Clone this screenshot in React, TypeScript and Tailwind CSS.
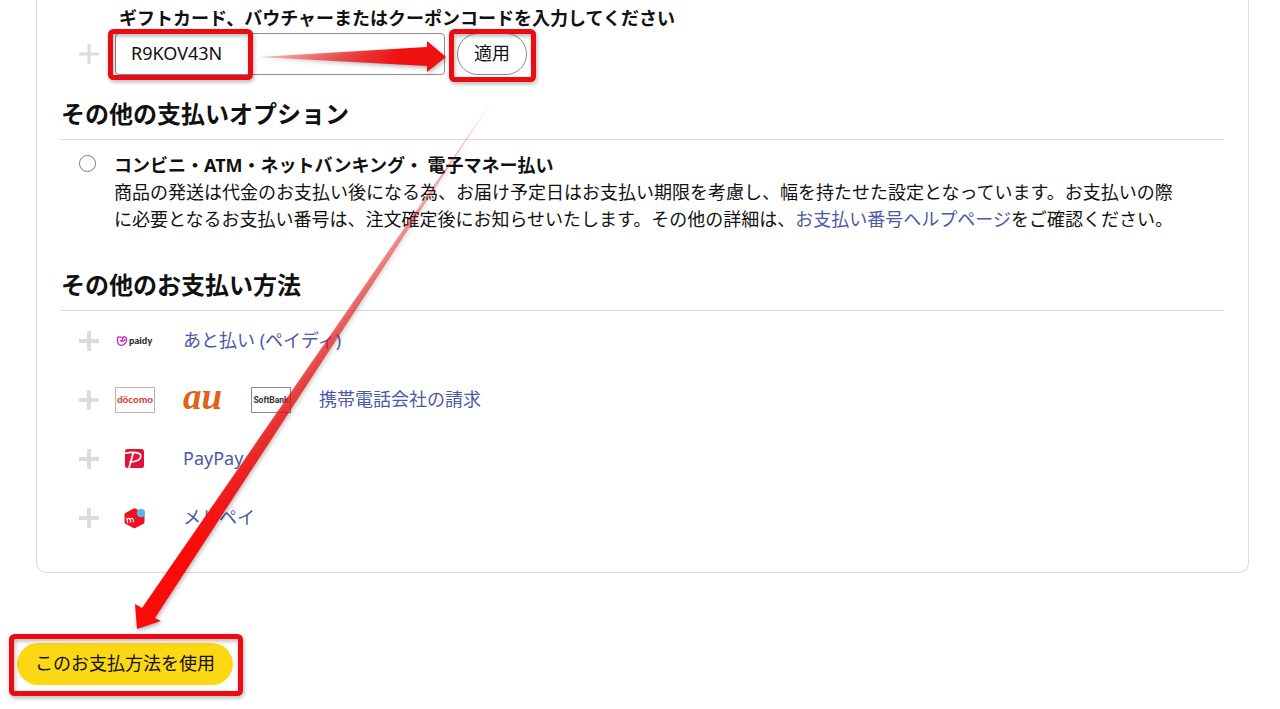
import type { ReactNode } from "react";

type PaymentMethod = {
  name: string;
  logos: ReactNode[];
};

const PlusIcon = ({ thin = false }: { thin?: boolean }) => (
  <svg viewBox="0 0 20 20" className="size-5" aria-hidden="true">
    <path d="M10 0v20M0 10h20" stroke="#dcdcdc" strokeWidth={thin ? 3 : 4} />
  </svg>
);

const PaidyLogo = () => (
  <svg viewBox="0 0 40 26" className="h-[26px] w-10" role="img" aria-label="paidy">
    <g fill="none" stroke="#c02bb4" strokeWidth="1.3" strokeLinecap="round">
      <path d="M3 9.200h3.200c1.800 0 2.300 2.600.2 3.200" />
      <path d="M3 9.200C2.300 11.500 2.200 15 4 16.600c1.700 1.400 4.900.9 6.300-1.400 1.400-2.300 1.600-4.900.2-6-1.200-.9-2.600-.2-2.700 1" />
      <path d="M5.200 12.600c1.400 1.200 3.800.8 4.600-.9" />
    </g>
    <text x="14" y="16" fontFamily="Lato, sans-serif" fontWeight="900" fontSize="9.5" fill="#26262b">
      paidy
    </text>
  </svg>
);

const DocomoLogo = () => (
  <svg viewBox="0 0 40 26" className="h-[26px] w-10" role="img" aria-label="docomo">
    <rect x="0.5" y="0.5" width="39" height="25" fill="#fff" stroke="#b5b5b5" />
    <text x="20" y="16" textAnchor="middle" fontFamily="Lato, sans-serif" fontWeight="900" fontSize="10" fill="#d8453f">
      döcomo
    </text>
  </svg>
);

const AuLogo = () => (
  <svg viewBox="0 0 40 26" className="h-[26px] w-10 overflow-visible" role="img" aria-label="au">
    <text
      x="0"
      y="22"
      fontFamily="'Liberation Serif', serif"
      fontStyle="italic"
      fontWeight="700"
      fontSize="37"
      fill="#dd6418"
    >
      au
    </text>
  </svg>
);

const SoftBankLogo = () => (
  <svg viewBox="0 0 40 26" className="h-[26px] w-10" role="img" aria-label="SoftBank">
    <rect x="0.5" y="0.5" width="39" height="25" fill="#fff" stroke="#888" />
    <text
      x="20"
      y="16"
      textAnchor="middle"
      fontFamily="Roboto, sans-serif"
      fontWeight="700"
      fontSize="8.5"
      fill="#333"
    >
      SoftBank
    </text>
  </svg>
);

const PayPayLogo = () => (
  <svg viewBox="0 0 40 26" className="h-[26px] w-10" role="img" aria-label="PayPay">
    <rect x="10" y="3" width="19" height="19" rx="2.5" fill="#e3123c" />
    <g fill="none" stroke="#fff">
      <path d="M10 7.300c7-1.600 16-1.200 15.800 3 -.2 3.600-5.500 5.500-11.300 5.700" strokeWidth="1.6" />
      <path d="M18.200 7 14 22" strokeWidth="1.7" />
    </g>
  </svg>
);

const MerpayLogo = () => (
  <svg viewBox="0 0 40 26" className="h-[26px] w-10" role="img" aria-label="メルペイ">
    <path
      d="M18.500 3.400 10.400 8.100Q9.500 8.700 9.500 9.700v7.400q0 1 .9 1.600l8.100 4.400q1 .5 2 0l8.100-4.400q.9-.6.9-1.600V9.700q0-1-.9-1.600L20.500 3.400q-1-.5-2 0z"
      fill="#ee1220"
    />
    <circle cx="26" cy="8" r="4.300" fill="#59b8ef" />
    <path
      d="M12.800 18.200l-1-5.200M12.300 14.800c.8-2 2.600-1.900 2.900-.1l.6 3M15.300 14.500c.8-1.800 2.500-1.700 2.800 0l.5 2.700"
      fill="none"
      stroke="#fff"
      strokeWidth="1.1"
    />
  </svg>
);

const methods: PaymentMethod[] = [
  { name: "あと払い (ペイディ)", logos: [<PaidyLogo key="paidy" />] },
  {
    name: "携帯電話会社の請求",
    logos: [<DocomoLogo key="docomo" />, <AuLogo key="au" />, <SoftBankLogo key="softbank" />],
  },
  { name: "PayPay", logos: [<PayPayLogo key="paypay" />] },
  { name: "メルペイ", logos: [<MerpayLogo key="merpay" />] },
];

const SectionTitle = ({ children }: { children: ReactNode }) => (
  <h2 className="border-b border-[#dcdcdc] pb-[7px] text-2xl leading-9 font-bold">{children}</h2>
);

const CouponForm = () => (
  <div className="flex items-end pl-[18px]">
    <div className="flex h-[42px] items-center">
      <button type="button" aria-label="コードを入力" className="block">
        <PlusIcon thin />
      </button>
    </div>
    <div className="pl-4">
      <label htmlFor="coupon" className="block pb-px pl-1 font-bold">
        ギフトカード、バウチャーまたはクーポンコードを入力してください
      </label>
      <div className="flex gap-3">
        <input
          id="coupon"
          type="text"
          defaultValue="R9KOV43N"
          className="h-[42px] w-[330px] rounded border border-[#8c8c8c] px-[15px] pb-0.5"
        />
        <button type="button" className="h-[42px] rounded-full border border-[#8c8c8c] px-4 pb-0.5">
          適用
        </button>
      </div>
    </div>
  </div>
);

const MethodRow = ({ name, logos }: PaymentMethod) => (
  <li className="flex h-[59px] items-center pl-[18px]">
    <button type="button" aria-label={`${name}を開く`}>
      <PlusIcon />
    </button>
    <div className="flex items-center gap-7 pl-4">
      {logos}
      <a href="#" className="text-[#4b59a8]">
        {name}
      </a>
    </div>
  </li>
);

// Red frames and arrows that walk the reader through the steps
const GuideOverlay = () => (
  <svg
    viewBox="0 0 560 709"
    className="pointer-events-none absolute top-0 left-0 h-[709px] w-[560px] drop-shadow-[1px_2px_2px_rgba(0,0,0,0.3)]"
    aria-hidden="true"
  >
    <defs>
      <linearGradient id="fade-right" gradientUnits="userSpaceOnUse" x1="256" y1="57" x2="400" y2="57">
        <stop offset="0" stopColor="#f01010" stopOpacity="0.25" />
        <stop offset="1" stopColor="#f01010" />
      </linearGradient>
      <linearGradient id="fade-down" gradientUnits="userSpaceOnUse" x1="492" y1="100" x2="190" y2="550">
        <stop offset="0" stopColor="#f50c0c" stopOpacity="0.15" />
        <stop offset="0.4" stopColor="#ec1414" stopOpacity="0.55" />
        <stop offset="0.75" stopColor="#ec1414" stopOpacity="0.86" />
        <stop offset="1" stopColor="#fb0a0a" />
      </linearGradient>
    </defs>
    <g fill="none" stroke="#ea0c12" strokeWidth="5">
      <rect x="110.5" y="31.5" width="140" height="46" rx="3" />
      <rect x="451.5" y="31.5" width="82" height="48" rx="3" />
      <rect x="11.5" y="636.5" width="229" height="57" rx="3" />
    </g>
    <path d="M258 57 427 47V41L446 57 427 72V66z" fill="url(#fade-right)" />
    <path d="M492 101 142 608 135 604 137 629 161 621 155 618z" fill="url(#fade-down)" />
  </svg>
);

export default function App() {
  return (
    <div className="relative bg-white pb-6 font-['Noto_Sans','Noto_Sans_CJK_JP',sans-serif] text-lg leading-[27px] text-[#111]">
      <main className="mr-[31px] ml-9 rounded-b-[10px] border border-t-0 border-[#dcdcdc] px-6 pt-[5px] pb-[25px]">
        <CouponForm />

        <section className="pt-[21px]">
          <SectionTitle>その他の支払いオプション</SectionTitle>
          <div className="flex pt-3 pr-10 pl-[18px]">
            <input
              id="convenience"
              type="radio"
              name="payment"
              className="mt-[3px] size-[17px] shrink-0 appearance-none rounded-full border border-[#777] checked:border-[5px]"
            />
            <div className="pl-[18px]">
              <label htmlFor="convenience" className="font-bold">
                コンビニ・ATM・ネットバンキング・ 電子マネー払い
              </label>
              <p>
                商品の発送は代金のお支払い後になる為、お届け予定日はお支払い期限を考慮し、幅を持たせた設定となっています。お支払いの際に必要となるお支払い番号は、注文確定後にお知らせいたします。その他の詳細は、
                <a href="#" className="text-[#4b59a8]">
                  お支払い番号ヘルプページ
                </a>
                をご確認ください。
              </p>
            </div>
          </div>
        </section>

        <section className="pt-[34px]">
          <SectionTitle>その他のお支払い方法</SectionTitle>
          <ul>
            {methods.map((method) => (
              <MethodRow key={method.name} {...method} />
            ))}
          </ul>
        </section>
      </main>

      <div className="pt-[70px] pl-[17px]">
        <button type="button" className="h-[42px] rounded-full bg-[#fcd714] px-[18px] pb-0.5">
          このお支払方法を使用
        </button>
      </div>

      <GuideOverlay />
    </div>
  );
}
